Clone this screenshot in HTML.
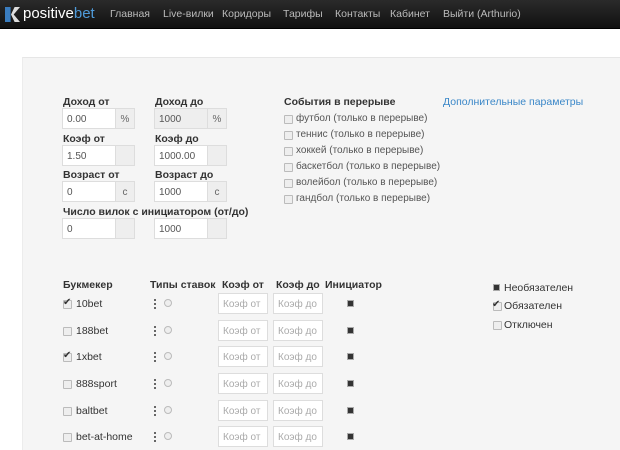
<!DOCTYPE html>
<html><head><meta charset="utf-8"><style>
*{margin:0;padding:0;box-sizing:border-box}
body{width:620px;height:450px;overflow:hidden;background:#fff;font-family:"Liberation Sans",Arial,sans-serif;font-size:10px;color:#333;position:relative}
.nav{position:absolute;left:0;top:0;width:620px;height:29px;background:linear-gradient(#2a2a2a,#111);border-bottom:1px solid #000}
.nav span{position:absolute;top:8px;color:#bbb;font-size:10.5px}
.panel{position:absolute;left:22px;top:57px;width:598px;height:393px;background:#f5f5f5;border-top:1px solid #e6e6e6;border-left:1px solid #ececec}
.a{position:absolute}
.lbl{position:absolute;font-weight:bold;font-size:10.5px;color:#333}
.in{position:absolute;height:21px;background:#fff;border:1px solid #ddd;font-size:10px;color:#555;padding:5px 0 0 4px}
.ad{position:absolute;height:21px;width:19px;background:#eee;border:1px solid #ddd;border-left:none;font-size:10px;color:#666;text-align:center;padding-top:5px}
.cb{position:absolute;width:9px;height:9px;border:1px solid #bbb;background:#eee;border-radius:1px}
.ct{position:absolute;color:#555;font-size:10px}
.bk{position:absolute;color:#333;font-size:10.5px}
.ki{position:absolute;width:50px;height:21px;background:#fff;border:1px solid #ddd;color:#aaa;font-size:10px;padding:5px 0 0 4px}
.sq{position:absolute;width:7px;height:7px;background:#333;border:1px solid #aaa}
.rd{position:absolute;width:8px;height:8px;border:1px solid #bbb;border-radius:50%;background:#eee}
.dt{position:absolute;width:2px;height:10px;background:repeating-linear-gradient(#666 0 2px,transparent 2px 4px)}
</style></head><body>
<div class="nav">
<div class="a" style="left:5px;top:7px;width:14px;height:15px;background:#3a7dbf;clip-path:polygon(0 0,40% 0,40% 100%,0 100%)"></div>
<div class="a" style="left:11px;top:7px;width:9px;height:15px;background:#ddd;clip-path:polygon(40% 0,100% 0,30% 50%,100% 100%,40% 100%,0 50%)"></div>
<span style="left:23px;top:5px;font-size:15px;color:#fff">positive<span style="position:static;color:#4f9ad8;font-size:15px">bet</span></span>
<span style="left:110px">Главная</span><span style="left:163px">Live-вилки</span><span style="left:222px">Коридоры</span><span style="left:283px">Тарифы</span><span style="left:335px">Контакты</span><span style="left:390px">Кабинет</span><span style="left:443px">Выйти (Arthurio)</span>
</div>
<div class="panel"></div>

<div class="lbl" style="left:63px;top:96px">Доход от</div><div class="lbl" style="left:155px;top:96px">Доход до</div>
<div class="in" style="left:62px;top:108px;width:54px">0.00</div><div class="ad" style="left:116px;top:108px">%</div>
<div class="in" style="left:154px;top:108px;width:54px;background:#eee">1000</div><div class="ad" style="left:208px;top:108px">%</div>
<div class="lbl" style="left:63px;top:133px">Коэф от</div><div class="lbl" style="left:155px;top:133px">Коэф до</div>
<div class="in" style="left:62px;top:145px;width:54px">1.50</div><div class="ad" style="left:116px;top:145px"></div>
<div class="in" style="left:154px;top:145px;width:54px">1000.00</div><div class="ad" style="left:208px;top:145px"></div>
<div class="lbl" style="left:63px;top:169px">Возраст от</div><div class="lbl" style="left:155px;top:169px">Возраст до</div>
<div class="in" style="left:62px;top:181px;width:54px">0</div><div class="ad" style="left:116px;top:181px">с</div>
<div class="in" style="left:154px;top:181px;width:54px">1000</div><div class="ad" style="left:208px;top:181px">с</div>
<div class="lbl" style="left:63px;top:206px">Число вилок с инициатором (от/до)</div>
<div class="in" style="left:62px;top:218px;width:54px">0</div><div class="ad" style="left:116px;top:218px"></div>
<div class="in" style="left:154px;top:218px;width:54px">1000</div><div class="ad" style="left:208px;top:218px"></div>

<div class="lbl" style="left:284px;top:96px">События в перерыве</div>
<div class="a" style="left:443px;top:96px;color:#3a87c8;font-size:10.5px">Дополнительные параметры</div>
<div class="cb" style="left:284px;top:115px"></div><div class="ct" style="left:296px;top:113px">футбол (только в перерыве)</div>
<div class="cb" style="left:284px;top:131px"></div><div class="ct" style="left:296px;top:129px">теннис (только в перерыве)</div>
<div class="cb" style="left:284px;top:147px"></div><div class="ct" style="left:296px;top:145px">хоккей (только в перерыве)</div>
<div class="cb" style="left:284px;top:163px"></div><div class="ct" style="left:296px;top:161px">баскетбол (только в перерыве)</div>
<div class="cb" style="left:284px;top:179px"></div><div class="ct" style="left:296px;top:177px">волейбол (только в перерыве)</div>
<div class="cb" style="left:284px;top:195px"></div><div class="ct" style="left:296px;top:193px">гандбол (только в перерыве)</div>

<div class="lbl" style="left:63px;top:279px">Букмекер</div>
<div class="lbl" style="left:150px;top:279px">Типы ставок</div>
<div class="lbl" style="left:222px;top:279px">Коэф от</div>
<div class="lbl" style="left:276px;top:279px">Коэф до</div>
<div class="lbl" style="left:325px;top:279px">Инициатор</div>

<div class="cb" style="left:63px;top:300px"></div><div class="a" style="left:63px;top:297px;font-size:10px">✔</div><div class="bk" style="left:76px;top:298px">10bet</div>
<div class="cb" style="left:63px;top:327px"></div><div class="bk" style="left:76px;top:325px">188bet</div>
<div class="cb" style="left:63px;top:353px"></div><div class="a" style="left:63px;top:350px;font-size:10px">✔</div><div class="bk" style="left:76px;top:351px">1xbet</div>
<div class="cb" style="left:63px;top:380px"></div><div class="bk" style="left:76px;top:378px">888sport</div>
<div class="cb" style="left:63px;top:407px"></div><div class="bk" style="left:76px;top:405px">baltbet</div>
<div class="cb" style="left:63px;top:433px"></div><div class="bk" style="left:76px;top:431px">bet-at-home</div>

<div class="dt" style="left:154px;top:299px"></div><div class="rd" style="left:164px;top:299px"></div>
<div class="dt" style="left:154px;top:326px"></div><div class="rd" style="left:164px;top:326px"></div>
<div class="dt" style="left:154px;top:352px"></div><div class="rd" style="left:164px;top:352px"></div>
<div class="dt" style="left:154px;top:379px"></div><div class="rd" style="left:164px;top:379px"></div>
<div class="dt" style="left:154px;top:406px"></div><div class="rd" style="left:164px;top:406px"></div>
<div class="dt" style="left:154px;top:432px"></div><div class="rd" style="left:164px;top:432px"></div>

<div class="ki" style="left:218px;top:293px">Коэф от</div><div class="ki" style="left:273px;top:293px">Коэф до</div>
<div class="ki" style="left:218px;top:320px">Коэф от</div><div class="ki" style="left:273px;top:320px">Коэф до</div>
<div class="ki" style="left:218px;top:346px">Коэф от</div><div class="ki" style="left:273px;top:346px">Коэф до</div>
<div class="ki" style="left:218px;top:373px">Коэф от</div><div class="ki" style="left:273px;top:373px">Коэф до</div>
<div class="ki" style="left:218px;top:400px">Коэф от</div><div class="ki" style="left:273px;top:400px">Коэф до</div>
<div class="ki" style="left:218px;top:426px">Коэф от</div><div class="ki" style="left:273px;top:426px">Коэф до</div>

<div class="sq" style="left:347px;top:300px"></div><div class="sq" style="left:347px;top:327px"></div><div class="sq" style="left:347px;top:353px"></div><div class="sq" style="left:347px;top:380px"></div><div class="sq" style="left:347px;top:407px"></div><div class="sq" style="left:347px;top:433px"></div>

<div class="sq" style="left:493px;top:284px"></div><div class="bk" style="left:504px;top:282px">Необязателен</div>
<div class="cb" style="left:493px;top:302px"></div><div class="a" style="left:492px;top:299px;font-size:10px">✔</div><div class="bk" style="left:504px;top:300px">Обязателен</div>
<div class="cb" style="left:493px;top:321px"></div><div class="bk" style="left:504px;top:319px">Отключен</div>
</body></html>
